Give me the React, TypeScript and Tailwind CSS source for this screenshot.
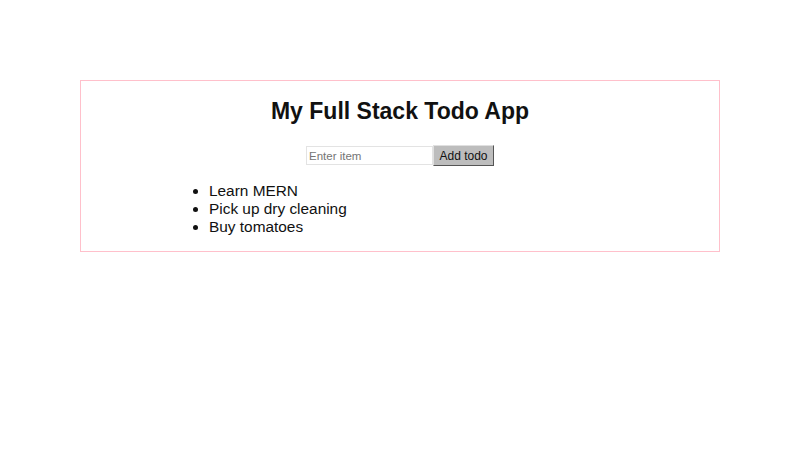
export default function App() {
  const todos = ["Learn MERN", "Pick up dry cleaning", "Buy tomatoes"];

  return (
    <div className="min-h-[452px] w-full bg-white pt-[80px] font-['Liberation_Sans',Arial,sans-serif] text-black">
      <div className="mx-auto w-[640px] border border-[#ffc0cb]">
        <h1 className="mt-[16px] mb-[20px] text-center text-[23px] font-bold leading-[28px] text-[#111]">
          My Full Stack Todo App
        </h1>

        {/* Add form */}
        <div className="flex items-center justify-center">
          <input
            type="text"
            placeholder="Enter item"
            className="h-[19px] w-[127px] border border-[#e3e3e3] px-[2px] text-[11.5px] outline-none placeholder:text-[#757575]"
          />
          <button className="h-[21px] w-[61px] border border-t-[#e0e0e0] border-l-[#e0e0e0] border-r-[#555] border-b-[#555] bg-[#bdbdbd] text-[12px] leading-none text-[#111]">
            Add todo
          </button>
        </div>

        <ul className="mt-[16px] mb-[15px] list-disc pl-[128px] text-[15.4px] leading-[18px] text-[#111]">
          {todos.map((t) => (
            <li key={t}>{t}</li>
          ))}
        </ul>
      </div>
    </div>
  );
}
